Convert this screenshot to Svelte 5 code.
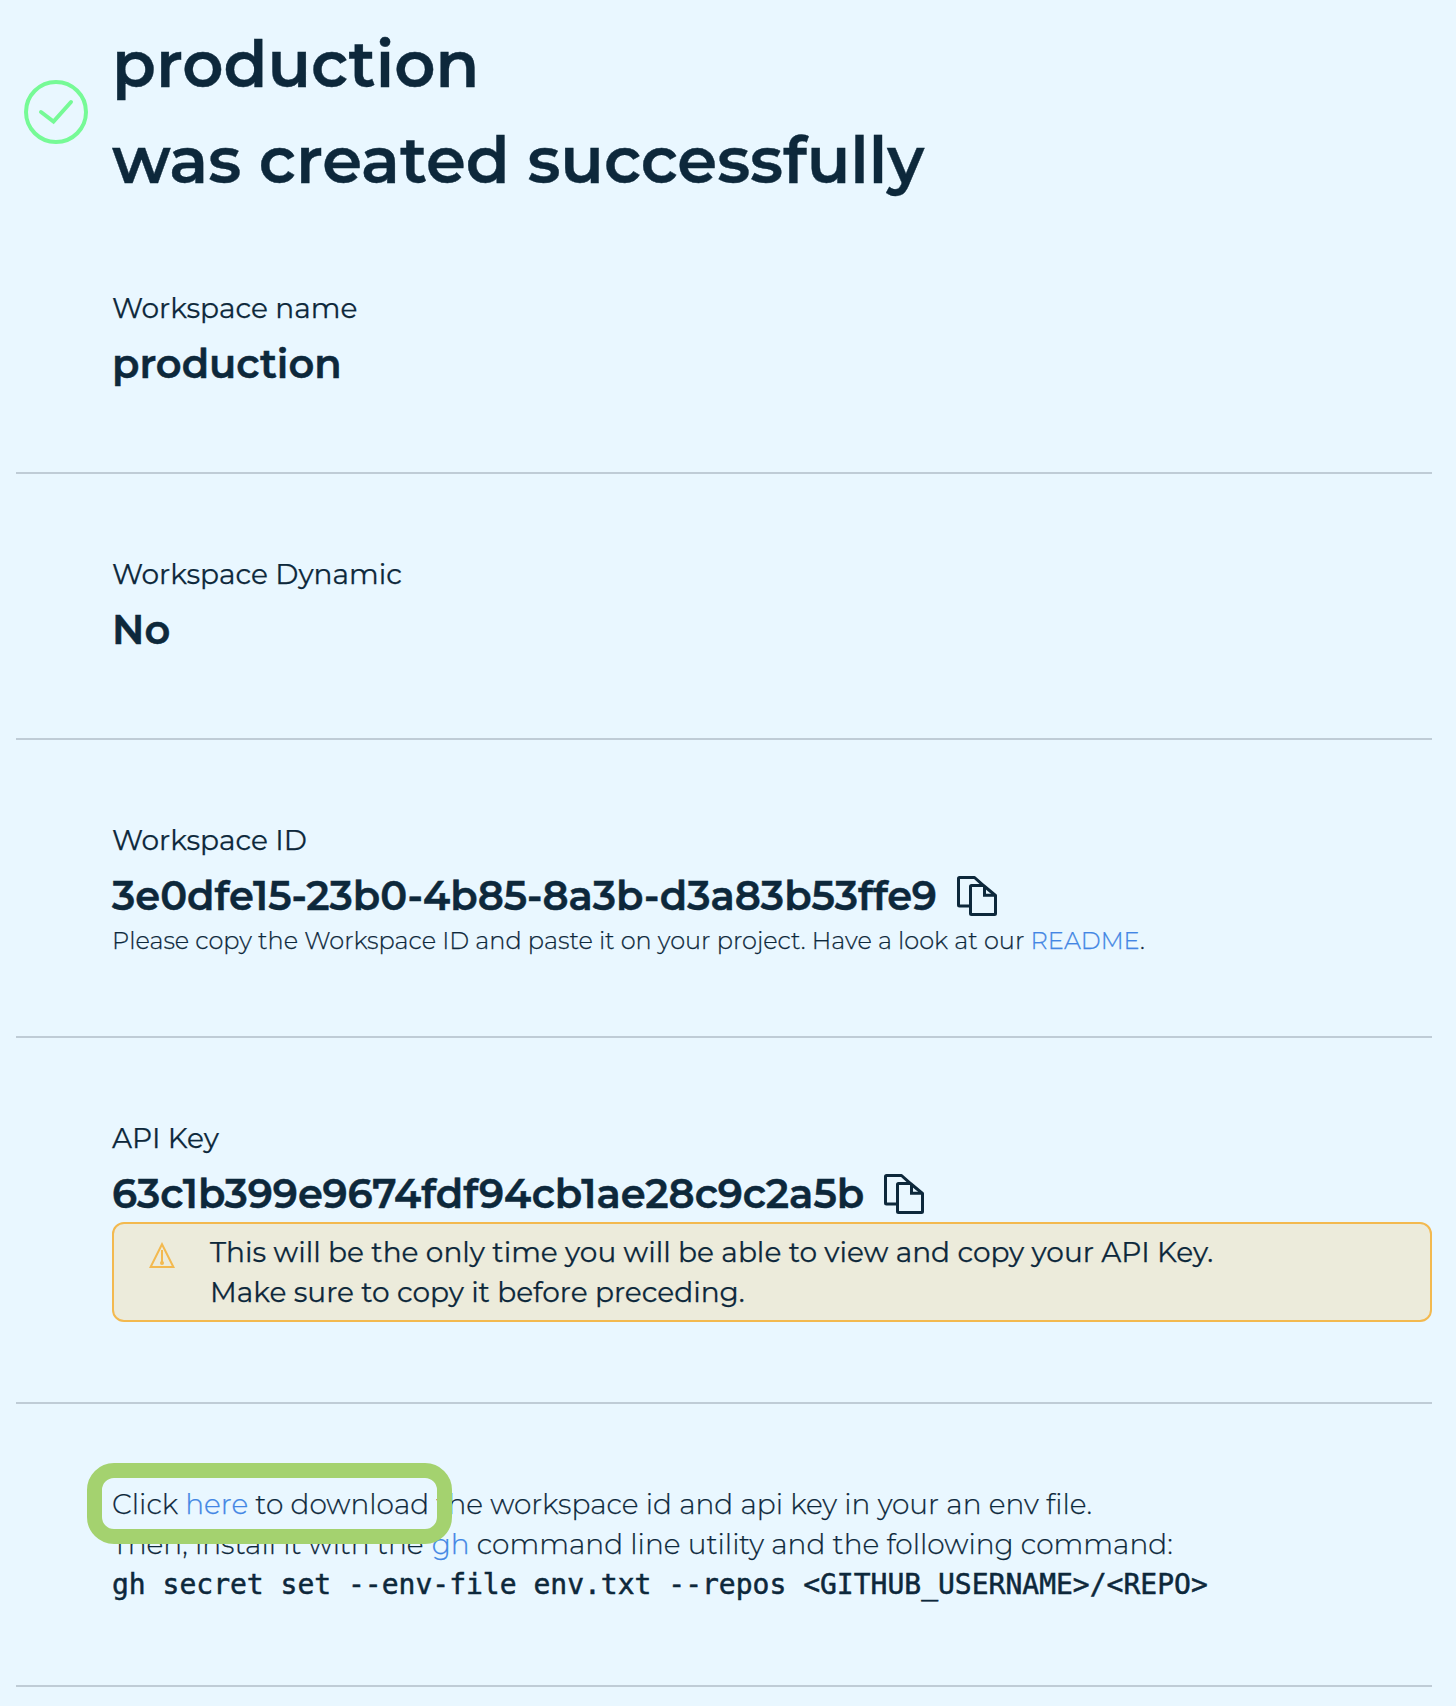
<script>
  const workspace = {
    name: 'production',
    dynamic: 'No',
    id: '3e0dfe15-23b0-4b85-8a3b-d3a83b53ffe9',
    apiKey: '63c1b399e9674fdf94cb1ae28c9c2a5b'
  };
  const command = 'gh secret set --env-file env.txt --repos <GITHUB_USERNAME>/<REPO>';
</script>

{#snippet copyIcon()}
  <button class="copy" aria-label="Copy">
    <svg width="40" height="40" viewBox="0 0 40 40" fill="none" stroke="currentColor" stroke-width="3" stroke-linejoin="round">
      <path d="M13 30H2.5Q1.5 30 1.5 29V2.5Q1.5 1.5 2.5 1.5H17.5L26 9.2" />
      <path d="M14.5 9.5H26.5L38.5 19.5V37.5Q38.5 38.5 37.5 38.5H14.5Q13.5 38.5 13.5 37.5V10.5Q13.5 9.5 14.5 9.5Z" />
      <path d="M27.5 10V19.2H38" stroke-linejoin="miter" />
    </svg>
  </button>
{/snippet}

<main>
  <header>
    <svg class="check" width="64" height="64" viewBox="0 0 64 64" fill="none" stroke="currentColor" stroke-width="4" stroke-linecap="round">
      <circle cx="32" cy="32" r="30" />
      <path d="M17 32L29.5 41.5L47 22" />
    </svg>
    <h1>{workspace.name}<br />was created successfully</h1>
  </header>

  <section>
    <div class="label">Workspace name</div>
    <div class="value">{workspace.name}</div>
  </section>

  <section>
    <div class="label">Workspace Dynamic</div>
    <div class="value">{workspace.dynamic}</div>
  </section>

  <section>
    <div class="label">Workspace ID</div>
    <div class="value"><span>{workspace.id}</span>{@render copyIcon()}</div>
    <div class="note">
      Please copy the Workspace ID and paste it on your project. Have a look at our
      <a href="#readme">README</a>.
    </div>
  </section>

  <section>
    <div class="label">API Key</div>
    <div class="value"><span>{workspace.apiKey}</span>{@render copyIcon()}</div>
    <div class="warning">
      <svg width="26" height="27" viewBox="0 0 26 27" fill="none" stroke="currentColor" stroke-width="2">
        <path d="M13 2.2L24.4 25H1.6Z" />
        <path d="M13 8V20" />
        <circle cx="13" cy="21" r="2" fill="currentColor" stroke="none" />
      </svg>
      <p>This will be the only time you will be able to view and copy your API Key.<br />Make sure to copy it before preceding.</p>
    </div>
  </section>

  <section class="install">
    <div class="row">
      Click <a href="#download">here</a> to download the workspace id and api key in your an env file.
    </div>
    <div class="row">
      Then, install it with the <a class="gh" href="#gh">gh</a> command line utility and the following command:
    </div>
    <code>{command}</code>
    <div class="highlight"></div>
  </section>
</main>

<style>
  :global(body) {
    background: #e9f7ff;
  }
  main {
    box-sizing: border-box;
    width: 1456px;
    height: 1706px;
    overflow: hidden;
    padding: 16px 24px 0 16px;
    background: #e9f7ff;
    color: #0d283b;
    font-family: Montserrat, Inter, sans-serif;
    -webkit-text-stroke: 0.25px currentColor;
  }
  header {
    display: flex;
    align-items: center;
    gap: 24px;
    height: 192px;
    padding-left: 8px;
  }
  .check {
    color: #76fa96;
  }
  h1 {
    margin: 0;
    font-size: 64px;
    line-height: 96px;
    font-weight: 600;
    white-space: nowrap;
    -webkit-text-stroke-width: 0.4px;
  }
  section {
    position: relative;
    padding: 80px 0 79px 96px;
    border-bottom: 2px solid #bfccd6;
  }
  .label {
    font-size: 28px;
    line-height: 40px;
  }
  .value {
    display: flex;
    align-items: center;
    margin-top: 6px;
    height: 59px;
    font-size: 40px;
    line-height: 59px;
    font-weight: 600;
    -webkit-text-stroke-width: 0.5px;
  }
  .copy {
    display: flex;
    margin: 0 0 0 20px;
    padding: 0;
    border: 0;
    background: none;
    color: inherit;
  }
  a {
    color: #4286e4;
    text-decoration: none;
    -webkit-text-stroke-color: #4286e4;
  }
  .note {
    margin-bottom: 1px;
    font-size: 24px;
    line-height: 31px;
    font-weight: 300;
    white-space: nowrap;
  }
  .warning {
    display: flex;
    align-items: flex-start;
    gap: 35px;
    box-sizing: border-box;
    height: 100px;
    margin: -1px 0 1px;
    padding: 8px 0 8px 35px;
    border: 2px solid #f3b94f;
    border-radius: 12px;
    background: #ecebdb;
  }
  .warning svg {
    margin-top: 10px;
    color: #f3b94f;
  }
  .warning p {
    margin: 0;
    font-size: 28px;
    line-height: 40px;
    white-space: nowrap;
  }
  .install {
    padding-bottom: 81px;
  }
  .row {
    height: 40px;
    font-size: 28px;
    line-height: 40px;
    font-weight: 300;
    white-space: nowrap;
  }
  .gh {
    margin-left: 1px;
  }
  code {
    display: block;
    height: 40px;
    font-family: Menlo, "DejaVu Sans Mono", monospace;
    font-size: 28px;
    line-height: 42px;
    white-space: nowrap;
    -webkit-text-stroke-width: 0.5px;
  }
  .highlight {
    position: absolute;
    top: 59px;
    left: 71px;
    box-sizing: border-box;
    width: 365px;
    height: 81px;
    border: 15px solid #a4d26f;
    border-radius: 27px;
  }
</style>
